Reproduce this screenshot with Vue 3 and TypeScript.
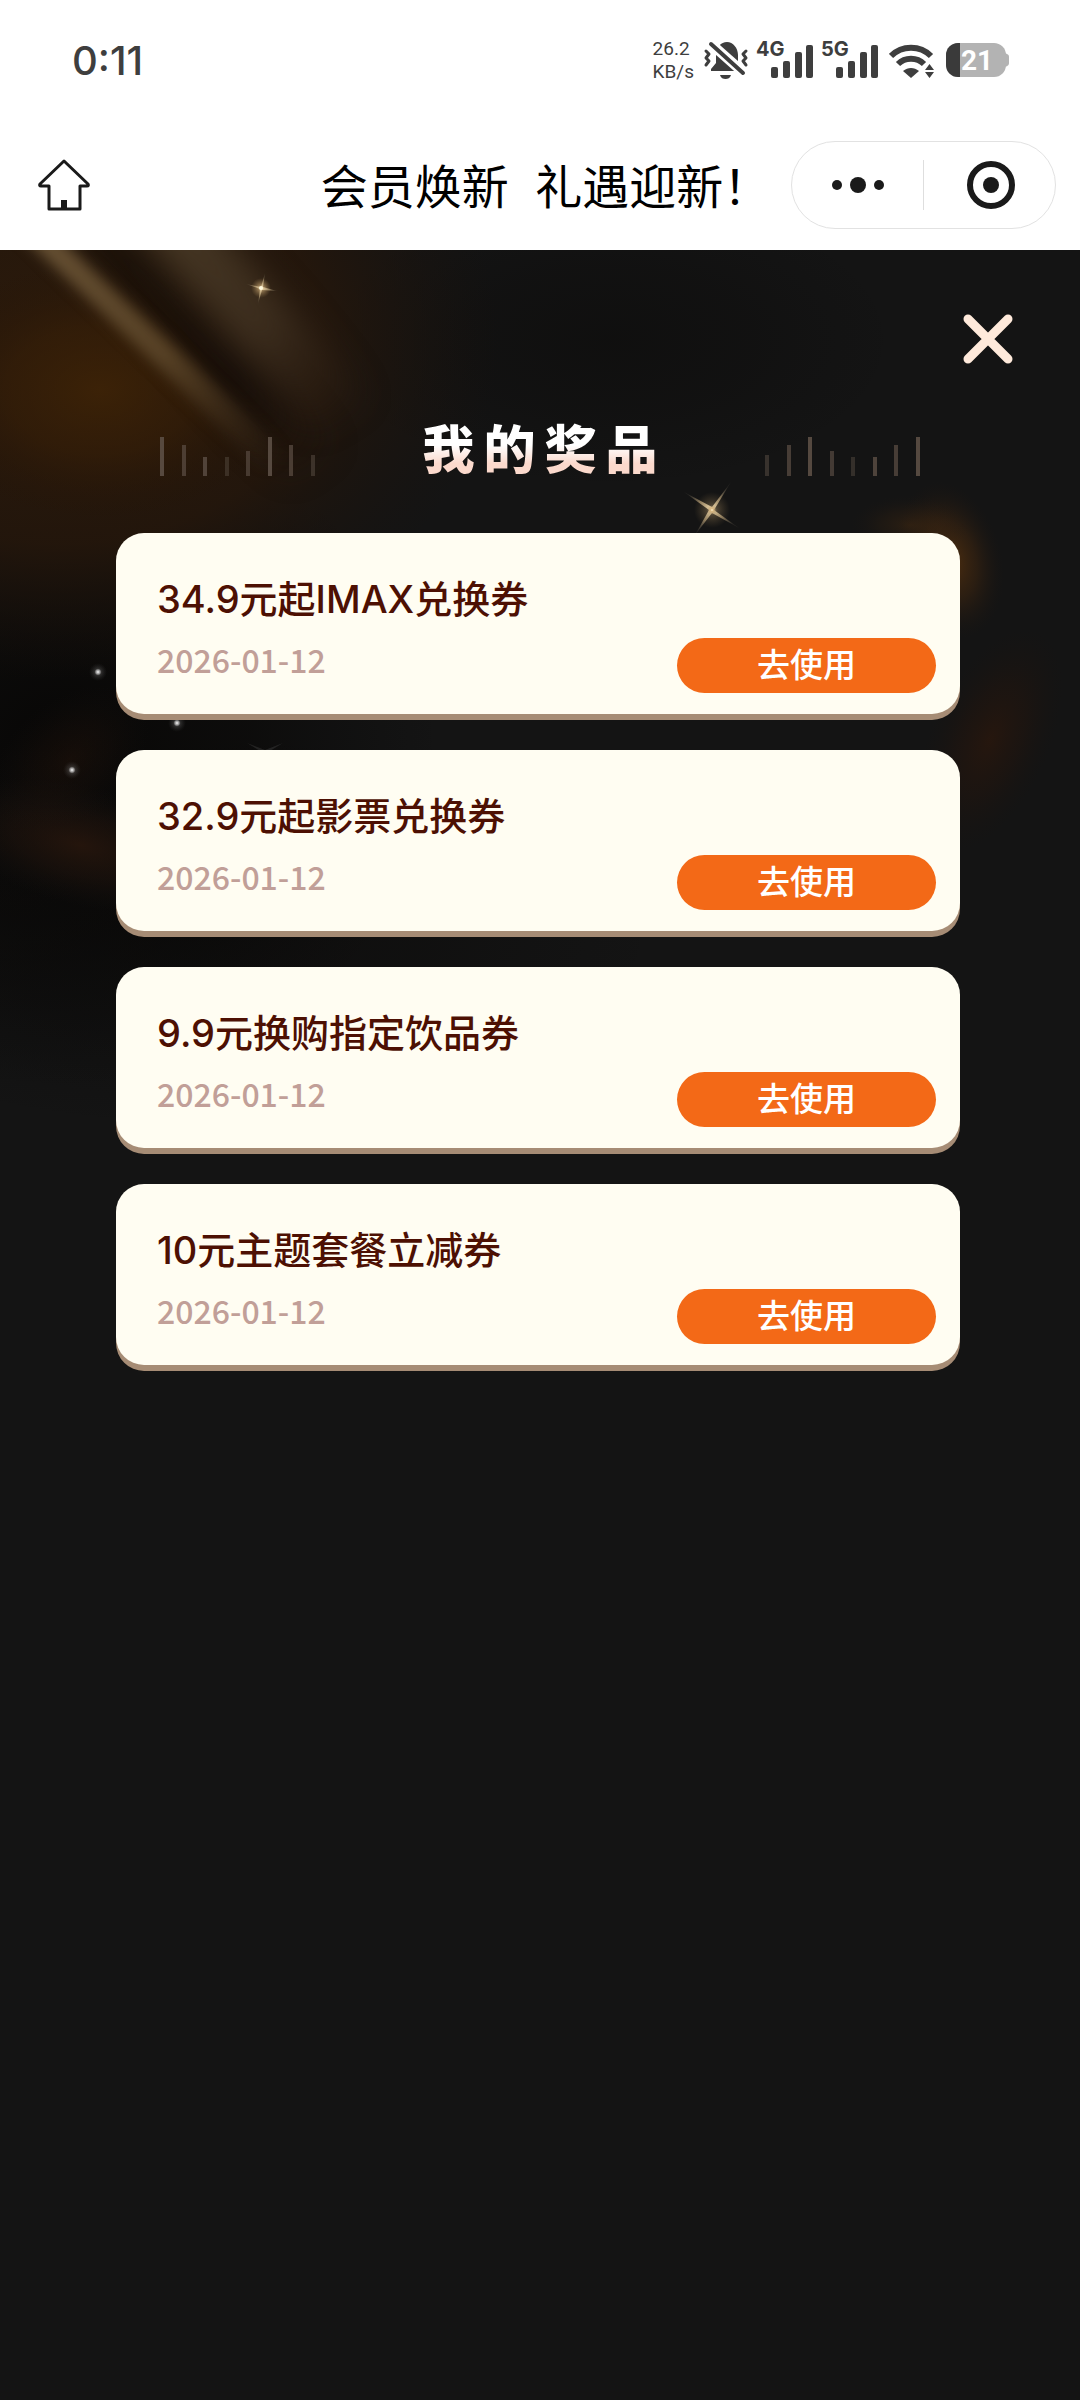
<script setup lang="ts">
interface Prize {
  id: number
  name: string
  date: string
}

const prizes: Prize[] = [
  { id: 1, name: '34.9元起IMAX兑换券', date: '2026-01-12' },
  { id: 2, name: '32.9元起影票兑换券', date: '2026-01-12' },
  { id: 3, name: '9.9元换购指定饮品券', date: '2026-01-12' },
  { id: 4, name: '10元主题套餐立减券', date: '2026-01-12' },
]

const networks: string[] = ['4G', '5G']

interface Tick {
  height: number
  opacity: number
}

const ticks: Tick[] = [
  { height: 39, opacity: 0.9 },
  { height: 31, opacity: 0.7 },
  { height: 19, opacity: 0.8 },
  { height: 19, opacity: 0.45 },
  { height: 25, opacity: 0.65 },
  { height: 39, opacity: 0.9 },
  { height: 31, opacity: 0.7 },
  { height: 21, opacity: 0.5 },
]
const mirroredTicks: Tick[] = [...ticks].reverse()
</script>

<template>
  <div class="page">
    <header class="top">
      <div class="status">
        <span class="clock">0:11</span>
        <div class="status-icons">
          <span class="speed">26.2<br />KB/s</span>
          <svg class="bell" width="46" height="40" viewBox="0 0 46 40" aria-hidden="true">
            <g fill="#3e3e3e">
              <path d="M8 31 V29 L13 23 V16 C13 7 18 2 24 2 C30 2 35 8 35 15 V22 L38 30 V31 Z" />
              <path d="M17 35 H28 C27 38 25 39 22.500 39 C20 39 18 38 17 35 Z" />
            </g>
            <path d="M6 2 L42 34" stroke="#fff" stroke-width="10" />
            <path d="M8 4 L40 33" stroke="#3e3e3e" stroke-width="4" stroke-linecap="round" />
            <g fill="none" stroke="#3e3e3e" stroke-width="3" stroke-linecap="round" stroke-linejoin="round">
              <path d="M3 11 L6 14 L3 18 L6 21 L3 25" />
              <path d="M43 11 L40 14 L43 18 L40 21 L43 25" />
            </g>
          </svg>
          <svg
            v-for="net in networks"
            :key="net"
            class="signal"
            width="58"
            height="56"
            viewBox="0 -8 58 56"
            :aria-label="net"
          >
            <text x="0" y="16" class="net">{{ net }}</text>
            <g fill="#3e3e3e">
              <rect x="15" y="27" width="7" height="11" rx="2" />
              <rect x="27" y="21" width="7" height="17" rx="2" />
              <rect x="39" y="12" width="7" height="26" rx="2" />
              <rect x="50" y="5" width="7" height="33" rx="2" />
            </g>
          </svg>
          <svg class="wifi" width="46" height="40" viewBox="0 0 46 40" aria-hidden="true">
            <g fill="none" stroke="#3e3e3e" stroke-width="6">
              <path d="M2 16 C13 5 31 5 42 16" />
              <path d="M9 24 C16 17 28 17 35 24" />
            </g>
            <path d="M14 31 C19 27 25 27 30 31 L22 38 Z" fill="#3e3e3e" />
            <path d="M40.500 20 L47 29 L47 31 L40.500 40 L34 31 V29 Z" fill="#fff" />
            <path d="M40.500 24 L45 30 H36 Z M36 32 H45 L40.500 38 Z" fill="#3e3e3e" />
          </svg>
          <svg class="battery" width="63" height="34" viewBox="0 0 63 34" aria-label="21%">
            <path d="M56 10 C60 10 63 11 63 14 V20 C63 23 60 24 56 24 Z" fill="#b3b3b3" />
            <rect width="60" height="34" rx="12" fill="#b3b3b3" />
            <path d="M14 0 H12 A12 12 0 0 0 0 12 V22 A12 12 0 0 0 12 34 H14 Z" fill="#3a3a3a" />
            <text x="31" y="27" text-anchor="middle" class="level">21</text>
          </svg>
        </div>
      </div>

      <nav class="nav">
        <button class="home" type="button" aria-label="首页">
          <svg width="52" height="52" viewBox="0 0 52 52" aria-hidden="true">
            <path
              d="M26 2 L50 25 Q51 27 49 27 H42 V50 H11 V27 H3 Q1 27 2 25 Z"
              fill="none"
              stroke="#1a1a1a"
              stroke-width="3"
              stroke-linejoin="round"
            />
            <rect x="23" y="41" width="6" height="9" fill="#1a1a1a" />
          </svg>
        </button>
        <h1 class="nav-title">会员焕新&nbsp; 礼遇迎新！</h1>
        <div class="capsule">
          <button class="capsule-btn" type="button" aria-label="更多">
            <svg width="52" height="50" viewBox="0 0 52 50" aria-hidden="true">
              <g fill="#1a1a1a">
                <circle cx="5" cy="25" r="5" />
                <circle cx="26" cy="25" r="8" />
                <circle cx="47" cy="25" r="5" />
              </g>
            </svg>
          </button>
          <i class="capsule-line"></i>
          <button class="capsule-btn" type="button" aria-label="关闭小程序">
            <svg width="50" height="50" viewBox="0 0 50 50" aria-hidden="true">
              <circle cx="26" cy="25" r="21" fill="none" stroke="#1a1a1a" stroke-width="6" />
              <circle cx="26" cy="25" r="8" fill="#1a1a1a" />
            </svg>
          </button>
        </div>
      </nav>
    </header>

    <main class="stage">
      <svg class="backdrop" viewBox="0 0 1080 1180" preserveAspectRatio="xMidYMin slice" aria-hidden="true">
        <defs>
          <radialGradient id="amber">
            <stop offset="0" stop-color="#402406" stop-opacity="0.8" />
            <stop offset="0.5" stop-color="#361e07" stop-opacity="0.6" />
            <stop offset="1" stop-color="#241306" stop-opacity="0" />
          </radialGradient>
          <radialGradient id="brown">
            <stop offset="0" stop-color="#2b1a0b" stop-opacity="1" />
            <stop offset="0.6" stop-color="#26170b" stop-opacity="0.85" />
            <stop offset="1" stop-color="#1a120c" stop-opacity="0" />
          </radialGradient>
          <radialGradient id="shade">
            <stop offset="0" stop-color="#060504" stop-opacity="0.9" />
            <stop offset="0.5" stop-color="#080706" stop-opacity="0.6" />
            <stop offset="1" stop-color="#0a0a0a" stop-opacity="0" />
          </radialGradient>
          <radialGradient id="ember">
            <stop offset="0" stop-color="#52300f" stop-opacity="0.95" />
            <stop offset="0.5" stop-color="#3a2410" stop-opacity="0.6" />
            <stop offset="1" stop-color="#1d1611" stop-opacity="0" />
          </radialGradient>
          <radialGradient id="rust">
            <stop offset="0" stop-color="#29170d" stop-opacity="0.85" />
            <stop offset="0.5" stop-color="#22150e" stop-opacity="0.5" />
            <stop offset="1" stop-color="#181310" stop-opacity="0" />
          </radialGradient>
          <radialGradient id="spark">
            <stop offset="0" stop-color="#fff6d8" />
            <stop offset="0.3" stop-color="#d9b57c" stop-opacity="0.8" />
            <stop offset="1" stop-color="#a08050" stop-opacity="0" />
          </radialGradient>
          <radialGradient id="ray">
            <stop offset="0" stop-color="#f0d9ac" />
            <stop offset="0.5" stop-color="#a8926c" stop-opacity="0.8" />
            <stop offset="1" stop-color="#6e6557" stop-opacity="0.2" />
          </radialGradient>
          <radialGradient id="dust">
            <stop offset="0" stop-color="#ffffff" />
            <stop offset="0.25" stop-color="#c0c0c0" stop-opacity="0.7" />
            <stop offset="0.4" stop-color="#777777" stop-opacity="0.3" />
            <stop offset="1" stop-color="#444444" stop-opacity="0" />
          </radialGradient>
          <linearGradient id="beam" gradientUnits="userSpaceOnUse" x1="40" y1="0" x2="280" y2="215">
            <stop offset="0" stop-color="#665033" />
            <stop offset="0.5" stop-color="#5c4629" stop-opacity="0.9" />
            <stop offset="1" stop-color="#4a3822" stop-opacity="0" />
          </linearGradient>
          <linearGradient id="beam-wide" gradientUnits="userSpaceOnUse" x1="150" y1="0" x2="340" y2="190">
            <stop offset="0" stop-color="#463724" />
            <stop offset="0.5" stop-color="#3f3020" stop-opacity="0.9" />
            <stop offset="1" stop-color="#2f2116" stop-opacity="0" />
          </linearGradient>
          <linearGradient id="gap" gradientUnits="userSpaceOnUse" x1="100" y1="0" x2="310" y2="230">
            <stop offset="0" stop-color="#150e08" stop-opacity="0.6" />
            <stop offset="0.6" stop-color="#120c09" stop-opacity="0.8" />
            <stop offset="1" stop-color="#130e0b" stop-opacity="0" />
          </linearGradient>
          <filter
            id="soft"
            filterUnits="userSpaceOnUse"
            color-interpolation-filters="sRGB"
            x="-100"
            y="-150"
            width="700"
            height="700"
          >
            <feGaussianBlur stdDeviation="7" />
          </filter>
          <filter
            id="softer"
            filterUnits="userSpaceOnUse"
            color-interpolation-filters="sRGB"
            x="-100"
            y="-150"
            width="700"
            height="700"
          >
            <feGaussianBlur stdDeviation="16" />
          </filter>
        </defs>

        <ellipse cx="610" cy="90" rx="290" ry="150" fill="url(#shade)" opacity="0.35" />
        <ellipse cx="60" cy="500" rx="380" ry="340" fill="url(#shade)" />
        <ellipse cx="200" cy="680" rx="460" ry="200" fill="url(#shade)" opacity="0.5" />
        <ellipse cx="60" cy="90" rx="440" ry="340" fill="url(#brown)" />
        <ellipse cx="100" cy="140" rx="190" ry="130" fill="url(#amber)" />
        <path d="M60 -30 L120 -30 L340 200 L290 230 Z" fill="url(#gap)" filter="url(#softer)" />
        <path d="M105 -60 L185 -60 L370 150 L310 180 Z" fill="url(#beam-wide)" filter="url(#softer)" />
        <path d="M-5 -40 L29 -40 L295 210 L265 220 Z" fill="url(#beam)" filter="url(#soft)" />

        <ellipse cx="950" cy="310" rx="52" ry="80" transform="rotate(-14 950 310)" fill="url(#ember)" />
        <ellipse cx="910" cy="275" rx="60" ry="30" fill="url(#ember)" opacity="0.4" />
        <ellipse cx="990" cy="490" rx="60" ry="120" transform="rotate(24 990 490)" fill="url(#rust)" />
        <ellipse cx="80" cy="595" rx="140" ry="60" transform="rotate(14 80 595)" fill="url(#rust)" />
        <ellipse cx="70" cy="510" rx="90" ry="60" transform="rotate(-40 70 510)" fill="url(#rust)" opacity="0.5" />

        <g transform="translate(261 38)">
          <circle r="10" fill="url(#spark)" opacity="0.7" />
          <path d="M4 -15 L2 -1 L16 3 L1 2 L-3 16 L-1 1 L-15 -4 L0 -1 Z" fill="url(#ray)" />
          <circle r="2" fill="#fff8dc" />
        </g>
        <g transform="translate(712 260)">
          <circle r="18" fill="url(#spark)" opacity="0.35" />
          <path d="M19 -28 L2 0 L27 18 L0 3 L-17 25 L-3 0 L-28 -18 L0 -3 Z" fill="url(#ray)" />
          <circle r="5" fill="url(#spark)" />
        </g>
        <path d="M247 493 L265 500 L283 493 L265 504 Z" fill="#555555" opacity="0.3" />
        <circle cx="98" cy="422" r="9" fill="url(#dust)" />
        <circle cx="177" cy="473" r="9" fill="url(#dust)" />
        <circle cx="72" cy="520" r="9" fill="url(#dust)" />
      </svg>

      <div class="close-row">
        <button class="close" type="button" aria-label="关闭">
          <svg width="50" height="50" viewBox="0 0 50 50" aria-hidden="true">
            <path d="M5 5 L45 45 M45 5 L5 45" stroke="#ffeadb" stroke-width="9" stroke-linecap="round" />
          </svg>
        </button>
      </div>

      <div class="heading">
        <div class="ticks" aria-hidden="true">
          <i v-for="(t, i) in ticks" :key="i" :style="{ height: t.height + 'px', opacity: t.opacity }"></i>
        </div>
        <h2 class="heading-text">我的奖品</h2>
        <div class="ticks" aria-hidden="true">
          <i v-for="(t, i) in mirroredTicks" :key="i" :style="{ height: t.height + 'px', opacity: t.opacity }"></i>
        </div>
      </div>

      <ul class="list">
        <li v-for="p in prizes" :key="p.id" class="card">
          <div class="info">
            <h3 class="name">{{ p.name }}</h3>
            <time class="date" :datetime="p.date">{{ p.date }}</time>
          </div>
          <button class="use" type="button">去使用</button>
        </li>
      </ul>
    </main>
  </div>
</template>

<style>
body {
  background: #141414;
}
</style>

<style scoped>
.page {
  display: flex;
  flex-direction: column;
  min-height: 100vh;
  font-family: Inter, 'Noto Sans CJK SC', sans-serif;
}
.page button {
  margin: 0;
  padding: 0;
  border: 0;
  background: none;
  font-family: inherit;
  cursor: pointer;
}
.page svg {
  display: block;
}
.top {
  background: #fff;
}
.status {
  display: flex;
  align-items: center;
  justify-content: space-between;
  height: 122px;
  padding: 0 71px 0 72px;
}
.clock {
  font-size: 40px;
  font-weight: 500;
  line-height: 48px;
  color: #3e3e3e;
}
.status-icons {
  display: flex;
  align-items: center;
  padding-bottom: 2px;
}
.speed {
  font-family: Roboto, sans-serif;
  font-size: 19px;
  line-height: 23px;
  color: #3e3e3e;
}
.bell {
  margin-left: 9px;
}
.signal {
  margin-left: 7px;
}
.wifi {
  margin-left: 10px;
}
.battery {
  margin-left: 11px;
}
.net {
  font-size: 20px;
  font-weight: 700;
  fill: #3e3e3e;
}
.level {
  font-family: Roboto, sans-serif;
  font-size: 28px;
  font-weight: 700;
  fill: #fff;
}
.nav {
  display: flex;
  align-items: center;
  height: 126px;
  padding: 0 24px 2px 38px;
}
.home {
  margin-top: 10px;
}
.nav-title {
  flex: 1;
  margin: 0;
  padding: 4px 0 0 210px;
  text-align: center;
  font-size: 47px;
  font-weight: 400;
  line-height: 60px;
  color: #000;
  white-space: nowrap;
}
.capsule {
  display: flex;
  align-items: center;
  width: 265px;
  height: 88px;
  box-sizing: border-box;
  border: 1px solid #e2e2e2;
  border-radius: 44px;
}
.capsule-btn {
  display: flex;
  flex: 1;
  justify-content: center;
}
.capsule-line {
  width: 1px;
  height: 50px;
  background: #dedede;
}
.stage {
  position: relative;
  flex: 1;
  overflow: hidden;
  background: #141414;
}
.backdrop {
  position: absolute;
  top: 0;
  left: 0;
  width: 100%;
}
.close-row {
  position: relative;
  display: flex;
  justify-content: flex-end;
  padding: 64px 67px 0;
}
.heading {
  position: relative;
  display: flex;
  align-items: flex-end;
  justify-content: space-between;
  height: 112px;
  padding: 0 160px;
}
.ticks {
  display: flex;
  align-items: flex-end;
  justify-content: space-between;
  width: 155px;
}
.ticks i {
  width: 4px;
  background: #5c4f45;
}
.heading-text {
  margin: 0;
  padding: 12px 0 0 9px;
  font-size: 52px;
  font-weight: 900;
  line-height: 50px;
  letter-spacing: 9px;
  color: transparent;
  background: linear-gradient(#fff 50%, #fbd9cc 80%);
  background-clip: text;
}
.list {
  position: relative;
  display: flex;
  flex-direction: column;
  gap: 36px;
  margin: 0;
  padding: 57px 120px 60px 116px;
  list-style: none;
}
.card {
  display: flex;
  align-items: flex-end;
  justify-content: space-between;
  height: 181px;
  box-sizing: border-box;
  padding: 0 24px 21px 41px;
  border-radius: 28px;
  background: #fffdf2;
  box-shadow: 0 6px 0 #a68c75;
}
.info {
  padding-bottom: 14px;
}
.name {
  margin: 0 0 12px;
  font-size: 38px;
  font-weight: 500;
  line-height: 56px;
  color: #4d1003;
}
.date {
  display: block;
  font-family: 'Noto Sans CJK SC', sans-serif;
  font-size: 32px;
  font-weight: 500;
  line-height: 40px;
  color: #c19f98;
}
.page .use {
  width: 259px;
  height: 55px;
  border-radius: 28px;
  background: #f36917;
  color: #fff;
  font-size: 33px;
  font-weight: 500;
  line-height: 55px;
}
</style>
